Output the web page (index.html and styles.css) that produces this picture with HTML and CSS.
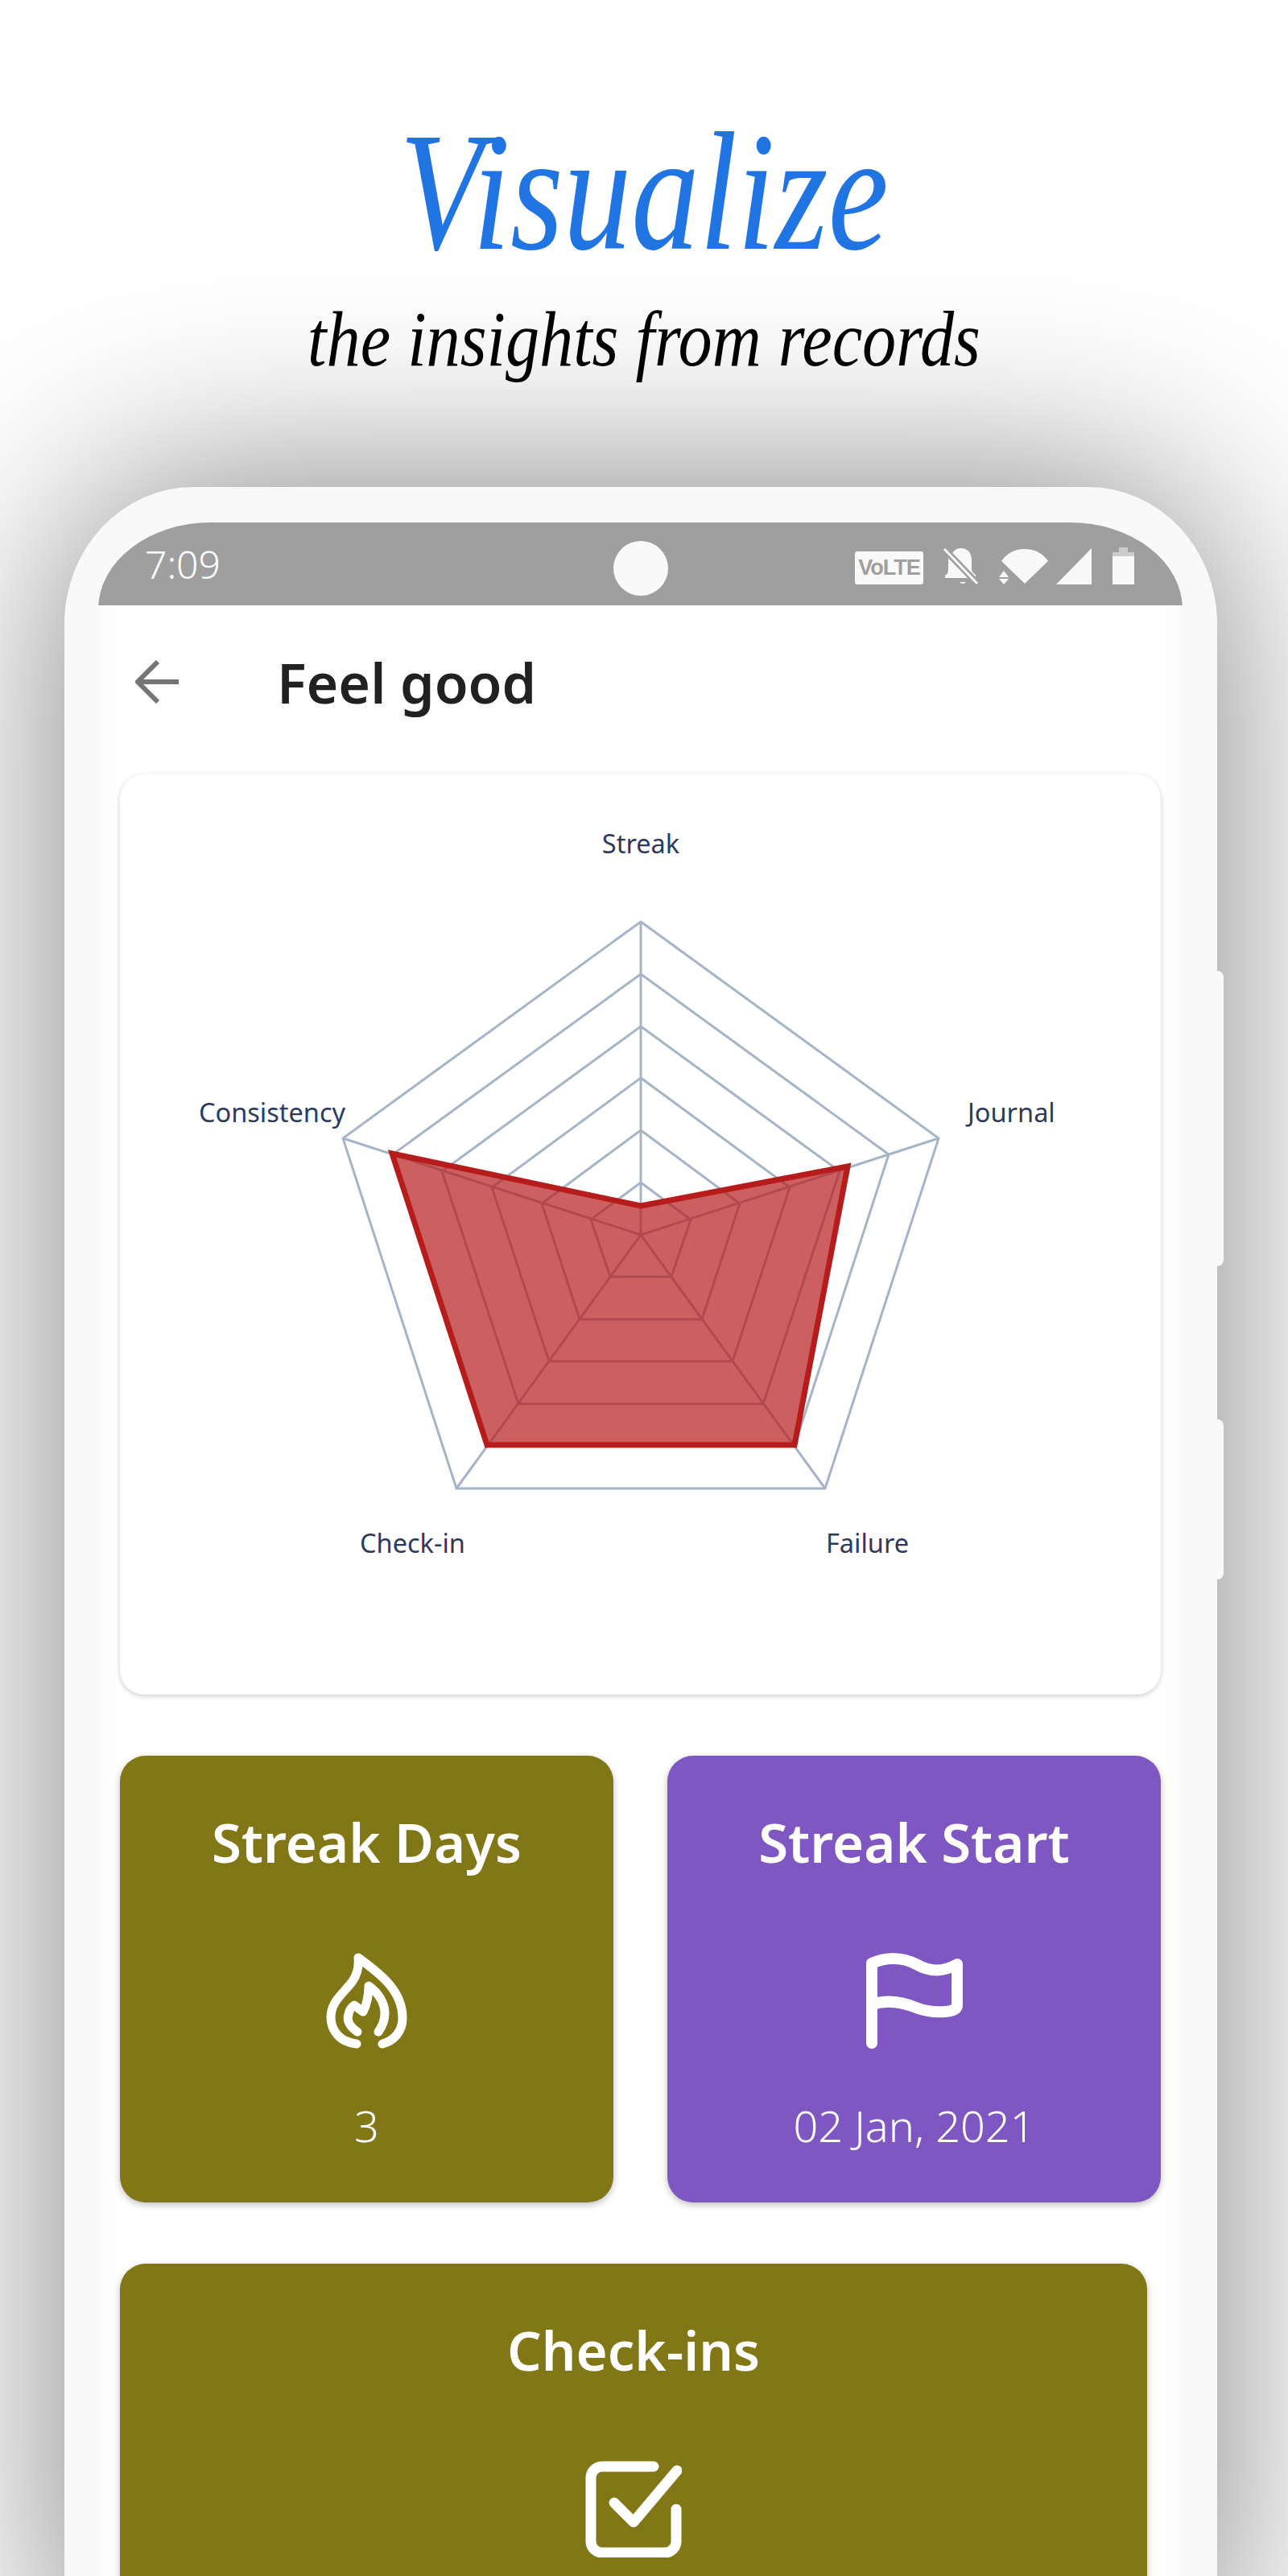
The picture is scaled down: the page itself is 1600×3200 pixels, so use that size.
FILE: index.html
```html
<!DOCTYPE html>
<html lang="en">
<head>
    <meta charset="UTF-8">
    <meta name="viewport" content="width=device-width, initial-scale=1.0">
    <title>Visualize</title>
    <link rel="stylesheet" href="styles.css">
</head>
<body>
    <div class="page">
        <div class="hero">
            <h1 class="hero-title">Visualize</h1>
            <p class="hero-sub">the insights from records</p>
        </div>

        <div class="phone">
            <span class="side-btn side-btn-top"></span>
            <span class="side-btn side-btn-low"></span>
            <div class="screen">
                <!-- Status bar -->
                <div class="status-bar">
                    <span class="clock">7:09</span>
                    <span class="camera"></span>
                    <div class="status-icons">
                        <span class="volte">VoLTE</span>
                        <svg class="icon-bell" viewBox="0 0 44 45">
                            <path d="M20 42a5 5 0 0 0 8 0z" fill="#f9f9f9"/>
                            <path d="M2 37v-3c3-2 4-4 4-8V12L31 37H2zM11 6c3-4 6-6 11-6 9 0 13 7 13 15v11c0 3 2 5 5 7l0 3z" fill="#f9f9f9"/>
                            <path d="M2 2L42 44" stroke="#9f9f9f" stroke-width="8"/>
                            <path d="M1 1L42 44" stroke="#f9f9f9" stroke-width="3"/>
                        </svg>
                        <svg class="icon-wifi" viewBox="0 0 62 45">
                            <path d="M3 16C10 6 20 1 32 1s22 5 29 15L32 44z" fill="#f9f9f9"/>
                            <path d="M0 36l6-8 6 8zM0 38l6 7 6-7z" fill="#f9f9f9"/>
                        </svg>
                        <svg class="icon-signal" viewBox="0 0 44 45"><path d="M44 0v45H0z" fill="#f9f9f9"/></svg>
                        <svg class="icon-battery" viewBox="0 0 27 46">
                            <path d="M8 0h11v6H8z" fill="#f9f9f9" opacity="0.5"/>
                            <path d="M0 6h27v5H0z" fill="#f9f9f9" opacity="0.5"/>
                            <path d="M0 11h27v35H0z" fill="#f9f9f9"/>
                        </svg>
                    </div>
                </div>

                <!-- App bar -->
                <div class="app-bar">
                    <svg class="back-arrow" viewBox="0 0 54 54">
                        <path d="M54 27H4M28 2L3 27l25 25" fill="none" stroke="#757575" stroke-width="6"/>
                    </svg>
                    <h2 class="app-title">Feel good</h2>
                </div>

                <div class="content">
                    <div class="chart-card">
                        <svg class="radar" viewBox="0 0 1293 1143">
                            <g class="radar-grid">
                                <polygon points="647,183 1017,452 876,887 418,887 277,452"/>
                                <polygon points="647,248 955,472 838,834 456,834 339,472"/>
                                <polygon points="647,313 894,493 799,782 495,782 400,493"/>
                                <polygon points="647,377 832,513 761,729 533,729 462,513"/>
                                <polygon points="647,442 770,533 723,677 571,677 524,533"/>
                                <polygon points="647,507 709,553 685,624 609,624 585,553"/>
                                <path d="M647,572V183M647,572L1017,452M647,572L876,887M647,572L418,887M647,572L277,452"/>
                            </g>
                            <polygon class="radar-data" points="647,536 904,487 838,833 456,833 338,471"/>
                            <text class="radar-label" x="647" y="98" text-anchor="middle">Streak</text>
                            <text class="radar-label" x="1053" y="432">Journal</text>
                            <text class="radar-label" x="877" y="967">Failure</text>
                            <text class="radar-label" x="298" y="967">Check-in</text>
                            <text class="radar-label" x="98" y="432">Consistency</text>
                        </svg>
                    </div>

                    <div class="tile-row">
                        <div class="tile tile-olive">
                            <h3 class="tile-title">Streak Days</h3>
                            <svg class="tile-icon" viewBox="0 0 101 120">
                                <g fill="none" stroke="#fff" stroke-width="11" stroke-linecap="round" stroke-linejoin="round">
                                    <path d="M38 113C18 111 6 97 6 80 6 60 22 50 33 35 39 26 41 16 40 6 66 25 95 46 95 81 95 97 85 109 70 113"/>
                                    <path d="M39 98C30 92 25 84 28 76 29 71 32 67 35 65L46 73C51 63 53 52 53 41 66 50 73 63 73 75 73 83 70 91 65 98"/>
                                </g>
                            </svg>
                            <span class="tile-value">3</span>
                        </div>
                        <div class="tile tile-purple">
                            <h3 class="tile-title">Streak Start</h3>
                            <svg class="tile-icon" viewBox="0 0 120 120">
                                <path d="M7 112V13C25 5 45 5 62 14 80 24 95 24 113 14V65C113 76 80 75 62 68 45 61 25 58 7 64" fill="none" stroke="#fff" stroke-width="14" stroke-linecap="round" stroke-linejoin="round"/>
                            </svg>
                            <span class="tile-value">02 Jan, 2021</span>
                        </div>
                    </div>

                    <div class="tile tile-olive tile-wide">
                        <h3 class="tile-title">Check-ins</h3>
                        <svg class="tile-icon" viewBox="0 0 120 120">
                            <g fill="none" stroke="#fff" stroke-width="13" stroke-linecap="round" stroke-linejoin="round">
                                <path d="M36 52l24 24L114 12"/>
                                <path d="M113 60v40a14 14 0 0 1-14 14H21A14 14 0 0 1 7 100V21A14 14 0 0 1 21 7h64"/>
                            </g>
                        </svg>
                    </div>
                </div>
            </div>
        </div>
    </div>
</body>
</html>
```

FILE: styles.css
```css
body {
    margin: 0;
    background-color: #fff;
    font-family: "Noto Sans", "Open Sans", sans-serif;
}

h1, h2, h3, p {
    margin: 0;
}

.page {
    height: 3200px;
    overflow: hidden;
}

.hero {
    height: 605px;
    text-align: center;
    font-family: "Liberation Serif", serif;
    font-style: italic;
}

.hero-title {
    padding-top: 148px;
    font-size: 190px;
    line-height: 190px;
    font-weight: 400;
    color: #2175e2;
    transform: scale(0.89, 1.1);
    transform-origin: 50% 85%;
}

.hero-sub {
    margin-top: 34px;
    font-size: 98px;
    line-height: 98px;
    color: #000;
    transform: scaleX(0.86);
}

.phone {
    position: relative;
    box-sizing: border-box;
    width: 1432px;
    height: 2700px;
    margin-left: 80px;
    padding: 44px 43px 0 42px;
    background-color: #f9f9f9;
    border-radius: 160px 160px 0 0 / 170px 170px 0 0;
    box-shadow: 0 0 250px rgba(0, 0, 0, 0.5);
}

.side-btn {
    position: absolute;
    left: 100%;
    width: 8px;
    background-color: #f9f9f9;
    border-radius: 0 8px 8px 0;
}

.side-btn-top {
    top: 601px;
    height: 367px;
}

.side-btn-low {
    top: 1158px;
    height: 199px;
}

.screen {
    height: 100%;
    background: linear-gradient(to right, #fbfbfb, #fff 25px, #fff calc(100% - 25px), #fbfbfb);
    border-radius: 140px 140px 0 0 / 108px 108px 0 0;
    overflow: hidden;
}

.status-bar {
    position: relative;
    display: flex;
    align-items: center;
    justify-content: space-between;
    box-sizing: border-box;
    height: 103px;
    padding: 0 60px 0 58px;
    background-color: #9f9f9f;
}

.clock {
    font-size: 48px;
    font-weight: 300;
    color: #fff;
}

.camera {
    position: absolute;
    left: 640px;
    top: 23px;
    width: 68px;
    height: 68px;
    border-radius: 50%;
    background-color: #f9f9f9;
}

.status-icons {
    display: flex;
    align-items: flex-end;
    height: 46px;
    margin-top: 4px;
}

.volte {
    box-sizing: border-box;
    width: 85px;
    height: 41px;
    margin-right: 25px;
    border-radius: 3px;
    background-color: #f9f9f9;
    color: #9f9f9f;
    font-family: "Liberation Sans", sans-serif;
    font-size: 27px;
    font-weight: 700;
    line-height: 41px;
    text-align: center;
    letter-spacing: -1px;
}

.icon-bell {
    width: 44px;
    height: 45px;
    margin-right: 25px;
}

.icon-wifi {
    width: 62px;
    height: 45px;
    margin-right: 9px;
}

.icon-signal {
    width: 44px;
    height: 45px;
    margin-right: 26px;
}

.icon-battery {
    width: 27px;
    height: 46px;
}

.app-bar {
    display: flex;
    align-items: center;
    height: 210px;
    padding-left: 46px;
    padding-bottom: 20px;
    box-sizing: border-box;
}

.back-arrow {
    width: 54px;
    height: 54px;
    margin-right: 122px;
}

.app-title {
    font-size: 68px;
    font-weight: 600;
    color: #212121;
}

.content {
    padding: 0 27px;
}

.chart-card {
    height: 1143px;
    background-color: #fff;
    border-radius: 30px;
    box-shadow: 0 2px 6px rgba(0, 0, 0, 0.2);
}

.radar {
    display: block;
    width: 100%;
    height: 100%;
}

.radar-grid {
    fill: none;
    stroke: #a6b4c7;
    stroke-width: 3;
}

.radar-data {
    fill: rgba(183, 28, 28, 0.7);
    stroke: #b71c1c;
    stroke-width: 7;
}

.radar-label {
    font-size: 32.5px;
    fill: #2d3a5c;
}

.tile-row {
    display: flex;
    gap: 67px;
    margin-top: 76px;
}

.tile {
    display: flex;
    flex-direction: column;
    align-items: center;
    box-sizing: border-box;
    width: 613px;
    height: 555px;
    padding-top: 62px;
    border-radius: 32px;
    color: #fff;
    box-shadow: 0 3px 8px rgba(0, 0, 0, 0.25);
}

.tile-olive {
    background-color: #827717;
}

.tile-purple {
    background-color: #7e57c2;
}

.tile-wide {
    width: 1276px;
    margin-top: 76px;
}

.tile-title {
    font-size: 67px;
    font-weight: 600;
    line-height: 90px;
}

.tile-icon {
    height: 120px;
    margin-top: 93px;
}

.tile-value {
    margin-top: 54px;
    font-size: 54px;
    font-weight: 300;
    line-height: 80px;
}
```
